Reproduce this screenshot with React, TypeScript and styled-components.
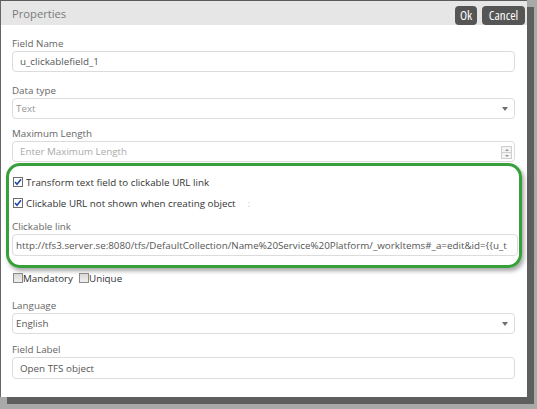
import React from "react";
import styled, { createGlobalStyle } from "styled-components";

const GlobalStyle = createGlobalStyle`
  html, body { margin: 0; padding: 0; }
  body {
    background: #a9a9a9;
    font-family: "Open Sans", "Noto Sans", sans-serif;
    overflow: hidden;
  }
`;

const Screen = styled.div`
  width: 537px;
  height: 409px;
  background: #a9a9a9;
  overflow: hidden;
`;

const Dialog = styled.div`
  width: 527px;
  height: 397px;
  box-sizing: border-box;
  background: #fff;
  border-left: 1px solid #666;
  border-top: 1px solid #5a5a5a;
  box-shadow: 7px 7px 0 #5e5e5e;
  display: flex;
  flex-direction: column;
`;

const Header = styled.div`
  height: 24px;
  flex: none;
  background: #e6e6e6;
  display: flex;
  align-items: center;
  justify-content: space-between;
  padding: 0 2px 0 11px;
`;

const Title = styled.span`
  font-size: 11.2px;
  color: #7a7a7a;
`;

const Actions = styled.div`
  display: flex;
  gap: 5px;
  padding-top: 4px;
`;

const ActionButton = styled.button<{ $w: number }>`
  width: ${(p) => p.$w}px;
  height: 19px;
  border: none;
  border-radius: 4px;
  background: #555;
  color: #fff;
  font-family: "Open Sans", "Noto Sans", sans-serif;
  font-size: 13px;
  font-stretch: 78%;
  padding: 0;
  display: flex;
  align-items: center;
  justify-content: center;
`;

const Body = styled.div`
  padding: 12px 12px 0 11px;
  display: flex;
  flex-direction: column;
  font-size: 9.8px;
`;

const Group = styled.div<{ $mb?: number }>`
  display: flex;
  flex-direction: column;
  margin-bottom: ${(p) => p.$mb ?? 0}px;
`;

const Label = styled.label`
  display: block;
  line-height: 14px;
  color: #666;
`;

const TextInput = styled.input<{ $h?: number; $pl?: number }>`
  display: block;
  box-sizing: border-box;
  width: 100%;
  height: ${(p) => p.$h ?? 21}px;
  border: 1px solid #dcdcdc;
  border-radius: 4px;
  padding: 0 0 0 ${(p) => p.$pl ?? 7}px;
  margin: 0;
  font-family: "Open Sans", "Noto Sans", sans-serif;
  font-size: 9.8px;
  color: #555;
  background: #fff;
  outline: none;
  &::placeholder { color: #aaa; }
`;

const NumberWrap = styled.div`
  position: relative;
`;

const Spinner = styled.div`
  position: absolute;
  right: 3px;
  top: 5px;
  display: flex;
  flex-direction: column;
`;

const SpinStep = styled.span<{ $up?: boolean }>`
  width: 9px;
  height: 5px;
  border: 1px solid #cfcfcf;
  background: #f3f3f3;
  display: flex;
  align-items: center;
  justify-content: center;
  & + & { border-top: none; }
  &::after {
    content: "";
    border-left: 2px solid transparent;
    border-right: 2px solid transparent;
    ${(p) => (p.$up ? "border-bottom: 2px solid #999;" : "border-top: 2px solid #999;")}
  }
`;

const SelectBox = styled.div<{ $muted?: boolean }>`
  box-sizing: border-box;
  height: 21px;
  border: 1px solid #dcdcdc;
  border-radius: 4px;
  padding: 0 6px 0 3px;
  display: flex;
  align-items: center;
  justify-content: space-between;
  color: ${(p) => (p.$muted ? "#999" : "#555")};
`;

const Caret = styled.span`
  width: 0;
  height: 0;
  border-left: 3px solid transparent;
  border-right: 3px solid transparent;
  border-top: 4px solid #6f6f6f;
`;

const Highlight = styled.div`
  margin: 1px -7px 0 -6px;
  border: 3px solid #37a03a;
  border-radius: 14px;
  box-shadow: 2px 3px 4px rgba(0, 0, 0, 0.35);
  padding: 9px 1px 9px 3px;
  display: flex;
  flex-direction: column;
`;

const CheckRow = styled.div<{ $mt?: number; $mb?: number }>`
  display: flex;
  align-items: center;
  height: 14px;
  margin-top: ${(p) => p.$mt ?? 0}px;
  margin-bottom: ${(p) => p.$mb ?? 0}px;
  color: #333;
`;

const Box = styled.span<{ $checked?: boolean; $gap?: number }>`
  box-sizing: border-box;
  width: 10px;
  height: 10px;
  margin: 0 ${(p) => p.$gap ?? 3}px 0 1px;
  border: 1px solid ${(p) => (p.$checked ? "#6e6e6e" : "#8a8a8a")};
  background: ${(p) => (p.$checked ? "#fff" : "linear-gradient(#d8d8d8, #f0f0f0)")};
  display: flex;
  align-items: center;
  justify-content: center;
  flex: none;
`;

const Faint = styled.span`
  margin-left: 12px;
  color: #b8c4d0;
`;

const Gap = styled.span`
  width: 5px;
`;

const CheckMark = () => (
  <svg width="8" height="8" viewBox="0 0 8 8">
    <path d="M1 4 L3 6.2 L7 1.2" fill="none" stroke="#2148a8" strokeWidth="1.6" />
  </svg>
);

const Check = ({ checked, gap }: { checked?: boolean; gap?: number }) => (
  <Box $checked={checked} $gap={gap}>{checked ? <CheckMark /> : null}</Box>
);

const LinkInput = styled(TextInput)`
  height: 22px;
  padding-left: 3px;
`;

const url =
  "http://tfs3.server.se:8080/tfs/DefaultCollection/Name%20Service%20Platform/_workItems#_a=edit&id={{u_t";

export default function App() {
  return (
    <Screen>
      <GlobalStyle />
      <Dialog>
        <Header>
          <Title>Properties</Title>
          <Actions>
            <ActionButton $w={22}>Ok</ActionButton>
            <ActionButton $w={43}>Cancel</ActionButton>
          </Actions>
        </Header>
        <Body>
          <Group $mb={12}>
            <Label>Field Name</Label>
            <TextInput readOnly defaultValue="u_clickablefield_1" />
          </Group>
          <Group $mb={8}>
            <Label>Data type</Label>
            <SelectBox $muted>
              <span>Text</span>
              <Caret />
            </SelectBox>
          </Group>
          <Group>
            <Label>Maximum Length</Label>
            <NumberWrap>
              <TextInput readOnly placeholder="Enter Maximum Length" />
              <Spinner>
                <SpinStep $up />
                <SpinStep />
              </Spinner>
            </NumberWrap>
          </Group>
          <Highlight>
            <CheckRow $mb={7}>
              <Check checked />
              Transform text field to clickable URL link
            </CheckRow>
            <CheckRow $mb={10}>
              <Check checked />
              Clickable URL not shown when creating object
              <Faint>:</Faint>
            </CheckRow>
            <Group>
              <Label>Clickable link</Label>
              <LinkInput readOnly defaultValue={url} />
            </Group>
          </Highlight>
          <CheckRow $mt={3} $mb={14}>
            <Check gap={0} />
            Mandatory
            <Gap />
            <Check gap={0} />
            Unique
          </CheckRow>
          <Group $mb={9}>
            <Label>Language</Label>
            <SelectBox>
              <span>English</span>
              <Caret />
            </SelectBox>
          </Group>
          <Group>
            <Label>Field Label</Label>
            <TextInput $h={22} readOnly defaultValue="Open TFS object" />
          </Group>
        </Body>
      </Dialog>
    </Screen>
  );
}
